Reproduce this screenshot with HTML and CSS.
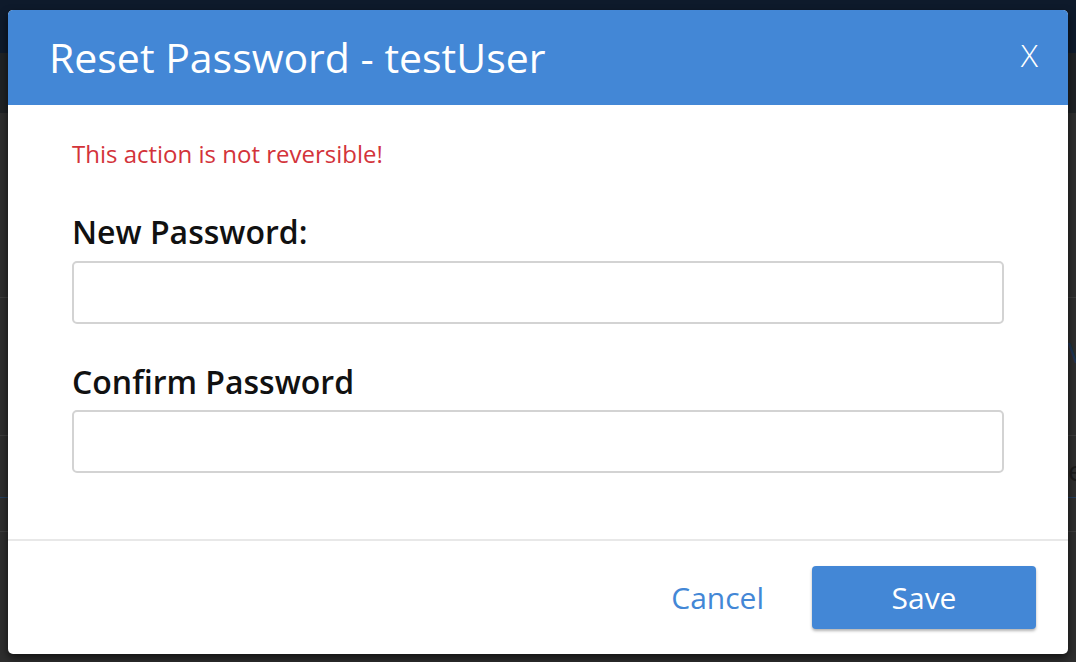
FILE: index.html
```html
<!DOCTYPE html>
<html lang="en">
<head>
<meta charset="utf-8">
<title>Reset Password</title>
<link rel="stylesheet" href="styles.css">
</head>
<body>
<div class="page">
  <div class="topbar"></div>
  <div class="subbar"></div>
  <div class="content">
    <div class="row row-a"></div>
    <div class="row row-b"><span class="bg-letter blue">V</span></div>
    <div class="row row-c"><span class="bg-letter">e</span></div>
    <div class="row row-d"></div>
  </div>
</div>
<div class="modal" role="dialog">
  <div class="modal-header">
    <h1 class="modal-title">Reset Password - testUser</h1>
    <button class="close-btn" type="button">X</button>
  </div>
  <div class="modal-body">
    <p class="warning">This action is not reversible!</p>
    <label class="field-label" for="pw1">New Password:</label>
    <input class="field-input" id="pw1" type="password">
    <label class="field-label second" for="pw2">Confirm Password</label>
    <input class="field-input" id="pw2" type="password">
  </div>
  <div class="modal-footer">
    <button class="btn-cancel" type="button">Cancel</button>
    <button class="btn-save" type="button">Save</button>
  </div>
</div>
</body>
</html>
```
FILE: styles.css
```css
* { box-sizing: border-box; }
html, body { margin: 0; padding: 0; }
body {
  width: 1076px;
  height: 662px;
  overflow: hidden;
  background: #2e2e2e;
  font-family: "Open Sans", "Noto Sans", sans-serif;
}
.page { display: flex; flex-direction: column; height: 662px; }
.topbar { height: 53px; background: #0e1a2b; }
.subbar { height: 60px; background: #1f2225; }
.content { flex: 1; display: flex; flex-direction: column; overflow: hidden; }
.row-a { height: 185px; border-bottom: 1px solid #3e3e3e; }
.row-b { height: 138px; border-bottom: 1px solid #3e3e3e; position: relative; overflow: hidden; }
.row-c { height: 62px; border-bottom: 1px solid #254060; position: relative; overflow: hidden; }
.row-d { height: 34px; border-bottom: 1px solid #3e3e3e; }
.bg-letter { position: absolute; left: 1068px; font-size: 28px; line-height: 1; color: #1b1b1b; white-space: nowrap; }
.blue { color: #1c3553; top: 40px; }
.row-c .bg-letter { top: 20px; }

.modal {
  position: absolute;
  left: 8px;
  top: 10px;
  width: 1060px;
  height: 644px;
  background: #fff;
  border-radius: 5px;
  overflow: hidden;
  display: flex;
  flex-direction: column;
  box-shadow: 0 4px 8px rgba(0,0,0,0.6);
}
.modal-header {
  height: 95px;
  flex: none;
  background: #4387d6;
  display: flex;
  align-items: center;
  justify-content: space-between;
  padding: 0 30px 0 41px;
}
.modal-title {
  margin: 0;
  font-size: 41px;
  font-weight: 400;
  color: #fff;
  line-height: 1;
}
.close-btn {
  background: none;
  border: 0;
  padding: 0 0 5px 0;
  color: #fff;
  font-family: "Open Sans", sans-serif;
  font-weight: 300;
  font-size: 32px;
  line-height: 1;
}
.modal-body {
  flex: 1;
  padding: 33px 64px 0 64px;
  display: flex;
  flex-direction: column;
  border-bottom: 2px solid #e8e8e8;
}
.warning {
  margin: 0;
  font-size: 24px;
  line-height: 32px;
  color: #d3333a;
}
.field-label {
  display: block;
  margin-top: 42px;
  margin-bottom: 9px;
  font-size: 32px;
  line-height: 40px;
  font-weight: 600;
  color: #111;
}
.field-label.second { margin-top: 38px; margin-bottom: 8px; }
.field-input {
  display: block;
  width: 100%;
  height: 63px;
  flex: none;
  border: 2px solid #d3d3d3;
  border-radius: 5px;
  background: #fff;
  font-size: 20px;
  padding: 0 14px;
}
.modal-footer {
  height: 113px;
  flex: none;
  display: flex;
  align-items: center;
  justify-content: flex-end;
  padding-right: 32px;
  gap: 48px;
}
.btn-cancel {
  background: none;
  border: 0;
  padding: 0;
  font-family: "Open Sans", sans-serif;
  font-size: 30px;
  color: #4387d6;
}
.btn-save {
  width: 224px;
  height: 63px;
  background: #4387d6;
  border: 0;
  border-radius: 4px;
  color: #fff;
  font-family: "Open Sans", sans-serif;
  font-size: 30px;
  box-shadow: 0 2px 3px rgba(0,0,0,0.3);
}
```
